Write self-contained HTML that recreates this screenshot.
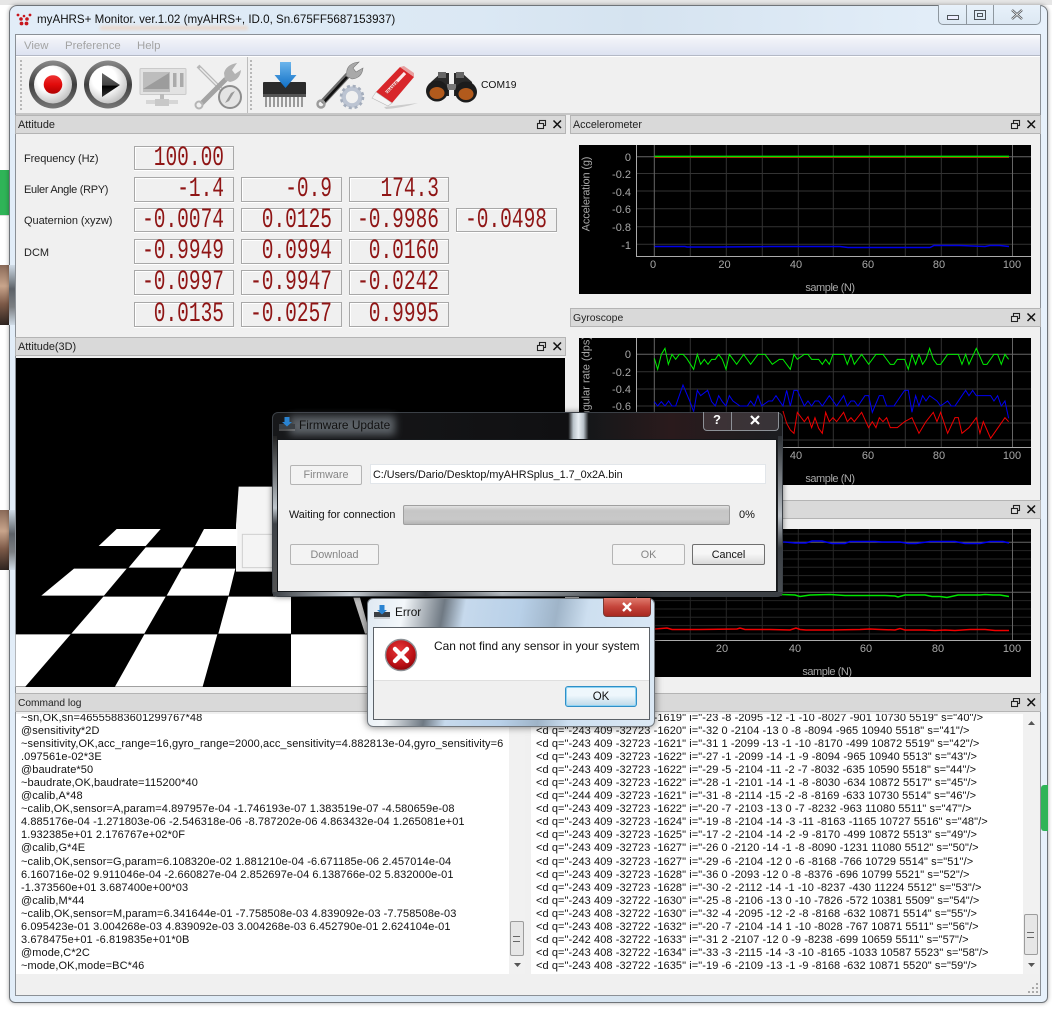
<!DOCTYPE html>
<html><head><meta charset="utf-8"><title>myAHRS+ Monitor</title>
<style>
html,body{margin:0;padding:0;width:1052px;height:1009px;overflow:hidden;background:#fff;font-family:"Liberation Sans",sans-serif;font-size:12px;color:#111}
div,pre,span,svg{position:absolute;box-sizing:border-box}
.t{white-space:nowrap;line-height:14px}
.tb{background:#d9d9d9;border:1px solid #b4b4b4;height:19px;line-height:19px;padding-left:2px;color:#222;font-size:10.9px}
.lcd{background:#f0f0f0;border:1px solid #a8a8a8;box-shadow:inset 1px 1px 0 #fff,0 1px 0 #fff}
.lcd span{right:9px;top:-1px;font:19.5px/24px "Liberation Mono",monospace;color:#8f1515;transform:scale(1,1.42);transform-origin:right center;white-space:pre}
pre{margin:0;font:11px/13.05px "Liberation Sans",sans-serif;letter-spacing:.08px;color:#111;white-space:pre}
.btn{border:1px solid #b4b4b4;border-radius:2px;background:#f3f3f3;color:#858585;text-align:center;font-size:10.8px;line-height:19px}
.lb{font-size:11px;color:#222}
</style></head><body>

<!-- desktop behind -->
<div style="left:0;top:0;width:1052px;height:5px;background:#e6e6e6"></div>
<div style="left:0;top:170px;width:9px;height:46px;background:#2fb457"></div>
<div style="left:0;top:265px;width:9px;height:60px;background:linear-gradient(#8a6a58,#c9a58c 35%,#7d5a48 65%,#2e2420)"></div>
<div style="left:0;top:510px;width:9px;height:60px;background:linear-gradient(#8a6a58,#c9a58c 35%,#7d5a48 65%,#2e2420)"></div>
<div style="left:0;top:215px;width:9px;height:1px;background:#ddd"></div>

<!-- main window -->
<div style="left:9px;top:5px;width:1039px;height:998px;border:1px solid #6f7479;border-radius:8px 8px 6px 6px;background:linear-gradient(90deg,#e2edf8,#dbe8f4 45%,#d5e3f0 60%,#e7f1fb);box-shadow:0 0 4px rgba(0,0,0,.35)"></div>
<div style="left:1041px;top:785px;width:7px;height:46px;background:#2fb457;border-radius:3px 0 0 3px"></div>
<div style="left:9px;top:265px;width:6px;height:60px;background:linear-gradient(#cfdbe6,#5d6268 40%,#7c7f83 70%,#cfdbe6)"></div>
<div style="left:9px;top:510px;width:6px;height:60px;background:linear-gradient(#cfdbe6,#5d6268 40%,#7c7f83 70%,#cfdbe6)"></div>

<!-- logo/title -->
<svg style="left:16px;top:13px" width="16" height="13" viewBox="0 0 16 13"><g fill="#c8161d"><circle cx="2" cy="2" r="1.4"/><circle cx="14" cy="2" r="1.4"/><circle cx="8" cy="3" r="1.3"/><circle cx="5" cy="6" r="1.8"/><circle cx="11" cy="6" r="1.8"/><circle cx="5.5" cy="10.5" r="1.9"/><circle cx="10.5" cy="10.5" r="1.9"/></g></svg>
<div style="left:100px;top:26px;width:148px;height:4px;background:#f0c9ad;opacity:.6;filter:blur(1.5px)"></div>
<div class="t" style="left:37px;top:13px;font-size:11.6px;color:#111">myAHRS+ Monitor. ver.1.02 (myAHRS+, ID.0, Sn.675FF5687153937)</div>

<!-- window buttons -->
<div style="left:938px;top:5px;width:103px;height:20px;border:1px solid #8e979f;border-top:none;border-radius:0 0 5px 5px;background:linear-gradient(#e8f1fa,#dce8f3)"></div>
<div style="left:966px;top:5px;width:1px;height:19px;background:#8e979f"></div>
<div style="left:993px;top:5px;width:1px;height:19px;background:#8e979f"></div>
<div style="left:947px;top:15px;width:12px;height:5px;border:1px solid #4d5358;background:#eef"></div>
<div style="left:974px;top:10px;width:12px;height:10px;border:1px solid #4d5358"></div>
<div style="left:977px;top:13px;width:6px;height:4px;border:1px solid #4d5358"></div>
<svg style="left:1010px;top:8px" width="14" height="13"><path d="M2 2L12 11M12 2L2 11" stroke="#54595e" stroke-width="2.4"/><path d="M2 2L12 11M12 2L2 11" stroke="#fff" stroke-width=".7"/></svg>

<!-- client -->
<div style="left:15px;top:34px;width:1026px;height:962px;background:#f0f0f0;border:1px solid #8b9096"></div>
<div style="left:16px;top:35px;width:1024px;height:21px;background:linear-gradient(#fbfcfe,#f0f2f8 25%,#dde3f1);border-bottom:1px solid #b4b9c6"></div>
<div class="t" style="left:24px;top:39px;color:#a3a3a3;font-size:11.4px">View</div>
<div class="t" style="left:65px;top:39px;color:#a3a3a3;font-size:11.4px">Preference</div>
<div class="t" style="left:137px;top:39px;color:#a3a3a3;font-size:11.4px">Help</div>
<div style="left:16px;top:56px;width:1024px;height:1px;background:#fff"></div>
<div style="left:16px;top:113px;width:1024px;height:2px;background:#c6c6c6"></div>
<div style="left:20px;top:60px;width:2px;height:50px;border-left:2px dotted #b8b8b8"></div>
<div style="left:250px;top:60px;width:2px;height:50px;border-left:2px dotted #b8b8b8"></div>
<div style="left:247px;top:57px;width:1px;height:56px;background:#bdbdbd"></div>

<!-- toolbar icons -->
<svg style="left:0;top:55px" width="520" height="60" viewBox="0 55 520 60">
<defs>
<radialGradient id="ig" cx=".4" cy=".35" r=".7"><stop offset=".45" stop-color="#fff"/><stop offset="1" stop-color="#bcbcbc"/></radialGradient>
<linearGradient id="ring" x1="0" y1="0" x2="0" y2="1"><stop offset="0" stop-color="#8a8a8a"/><stop offset=".5" stop-color="#3f3f3f"/><stop offset="1" stop-color="#777"/></linearGradient>
<linearGradient id="tri" x1="0" y1="0" x2="0" y2="1"><stop offset="0" stop-color="#666"/><stop offset=".5" stop-color="#444"/><stop offset=".55" stop-color="#000"/><stop offset="1" stop-color="#333"/></linearGradient>
<linearGradient id="rd" x1="0" y1="0" x2="0" y2="1"><stop offset="0" stop-color="#ee3333"/><stop offset=".5" stop-color="#e20b0b"/><stop offset="1" stop-color="#b00000"/></linearGradient>
<linearGradient id="blu" x1="0" y1="0" x2="0" y2="1"><stop offset="0" stop-color="#6cb5ec"/><stop offset="1" stop-color="#0f6fc6"/></linearGradient>
</defs>
<circle cx="53" cy="84.5" r="24" fill="url(#ring)"/><circle cx="53" cy="84.5" r="19" fill="url(#ig)"/><circle cx="53" cy="84.5" r="9.3" fill="url(#rd)"/>
<circle cx="108" cy="84.5" r="24" fill="url(#ring)"/><circle cx="108" cy="84.5" r="19" fill="url(#ig)"/><path d="M102 73L120 85L102 97Z" fill="url(#tri)"/>
<!-- monitor -->
<rect x="140" y="68.5" width="46" height="26" rx="1" fill="#e2e2e2" stroke="#cacaca"/>
<rect x="143" y="72" width="27" height="20" fill="#bdbdbd"/><path d="M143 89L169 73V89Z" fill="#9c9c9c"/>
<rect x="173" y="73" width="3.5" height="14" fill="#aaa"/><rect x="180" y="73" width="3.5" height="14" fill="#aaa"/>
<rect x="160" y="94" width="4" height="7" fill="#bbb"/><rect x="146" y="100" width="32" height="4" fill="#d6d6d6"/><rect x="155" y="99" width="14" height="7" fill="#c8c8c8"/>
<!-- tools disabled -->
<path d="M198 66L232 100" stroke="#b8b8b8" stroke-width="4"/><path d="M200 68L226 94" stroke="#ececec" stroke-width="1.4"/>
<path d="M201 104L226 79" stroke="#a3a3a3" stroke-width="5"/>
<path d="M225 80L224 73Q226 65 237 63L232 70L235 74L241 70Q240 80 230 82Z" fill="#b3b3b3"/>
<circle cx="230" cy="97" r="11" fill="#e4e4e4" stroke="#8d8d8d" stroke-width="2"/><path d="M225 103L231 93L235 91L229 101Z" fill="#9a9a9a"/>
<circle cx="199" cy="105" r="3.5" fill="none" stroke="#b5b5b5" stroke-width="2"/>
<!-- chip -->
<g stroke="#9a9a9a" stroke-width="2"><path d="M266 97V107M270 97V107M274 97V107M278 97V107M282 97V107M286 97V107M290 97V107M294 97V107M298 97V107M302 97V107"/></g>
<rect x="263" y="82" width="43" height="15" rx="1" fill="#2b2b2b"/><rect x="263" y="94" width="43" height="3" fill="#555"/>
<path d="M280 62H291V75H296.5L285.5 88L274.5 75H280Z" fill="url(#blu)"/>
<!-- wrench -->
<path d="M322 103L348 75" stroke="#6f6f6f" stroke-width="6"/><path d="M324 102L347 77" stroke="#111" stroke-width="2.6"/>
<circle cx="321" cy="104" r="3.5" fill="none" stroke="#9b9b9b" stroke-width="2.4"/>
<path d="M346 76L347 70Q349 63 359 62L353 68L356 72L363 68Q362 78 352 79Z" fill="#a9a9a9" stroke="#777" stroke-width=".6"/>
<circle cx="352" cy="97" r="8.4" fill="none" stroke="#bcc4d2" stroke-width="4.5"/><circle cx="352" cy="97" r="11" fill="none" stroke="#a4adbc" stroke-width="2.6" stroke-dasharray="3 2.8"/>
<!-- eraser -->
<path d="M384 107L418 103Q402 108 386 109Z" fill="#ccc"/>
<path d="M376 92L400 67L414 77L392 103Z" fill="#d8262a"/>
<path d="M372 98L376 92L392 103L388 106Z" fill="#f5f5f5" stroke="#bbb" stroke-width=".6"/>
<path d="M400 67L404 66L414 73L414 77Z" fill="#e7a0a0"/>
<path d="M386 93L405 73" stroke="#fff" stroke-width="3.2" opacity=".9"/>
<text x="0" y="0" transform="translate(387 94.5) rotate(-46)" font-size="4" font-weight="bold" fill="#b11">ERASER</text>
<!-- binoculars -->
<path d="M431 82L441 73H449V96H430Z" fill="#2a2a2a"/><path d="M472 82L462 73H454V96H473Z" fill="#2a2a2a"/>
<rect x="438" y="72" width="8" height="6" fill="#666"/><rect x="456" y="72" width="8" height="6" fill="#666"/>
<rect x="447" y="84" width="9" height="6" fill="#777"/>
<ellipse cx="437" cy="91" rx="11" ry="10.5" fill="#1c1c1c"/><ellipse cx="466" cy="92" rx="11" ry="10.5" fill="#1c1c1c"/>
<ellipse cx="437" cy="93" rx="7.5" ry="6" fill="#b25a1c"/><ellipse cx="466" cy="94" rx="7.5" ry="6" fill="#b25a1c"/>
</svg>
<div class="t" style="left:481px;top:79px;font-size:10.3px">COM19</div>

<!-- Attitude panel -->
<div class="tb" style="left:15px;top:115px;width:551px">Attitude</div>
<div class="t lb" style="left:24px;top:152px;letter-spacing:-.1px">Frequency (Hz)</div>
<div class="t lb" style="left:24px;top:183px;letter-spacing:-.3px">Euler Angle (RPY)</div>
<div class="t lb" style="left:24px;top:214px;letter-spacing:-.05px">Quaternion (xyzw)</div>
<div class="t lb" style="left:24px;top:246px">DCM</div>

<div class="lcd" style="left:134px;top:146px;width:100px;height:24px"><span>100.00</span></div>
<div class="lcd" style="left:134px;top:177px;width:100px;height:25px"><span>-1.4</span></div>
<div class="lcd" style="left:241px;top:177px;width:101px;height:25px"><span>-0.9</span></div>
<div class="lcd" style="left:349px;top:177px;width:100px;height:25px"><span>174.3</span></div>
<div class="lcd" style="left:134px;top:208px;width:100px;height:24px"><span>-0.0074</span></div>
<div class="lcd" style="left:241px;top:208px;width:101px;height:24px"><span>0.0125</span></div>
<div class="lcd" style="left:349px;top:208px;width:100px;height:24px"><span>-0.9986</span></div>
<div class="lcd" style="left:456px;top:208px;width:101px;height:24px"><span>-0.0498</span></div>
<div class="lcd" style="left:134px;top:239px;width:100px;height:25px"><span>-0.9949</span></div>
<div class="lcd" style="left:241px;top:239px;width:101px;height:25px"><span>0.0994</span></div>
<div class="lcd" style="left:349px;top:239px;width:100px;height:25px"><span>0.0160</span></div>
<div class="lcd" style="left:134px;top:270px;width:100px;height:25px"><span>-0.0997</span></div>
<div class="lcd" style="left:241px;top:270px;width:101px;height:25px"><span>-0.9947</span></div>
<div class="lcd" style="left:349px;top:270px;width:100px;height:25px"><span>-0.0242</span></div>
<div class="lcd" style="left:134px;top:302px;width:100px;height:25px"><span>0.0135</span></div>
<div class="lcd" style="left:241px;top:302px;width:101px;height:25px"><span>-0.0257</span></div>
<div class="lcd" style="left:349px;top:302px;width:100px;height:25px"><span>0.9995</span></div>

<!-- 3D panel -->
<div class="tb" style="left:15px;top:337px;width:551px">Attitude(3D)</div>
<div style="left:16px;top:358px;width:549px;height:329px;background:#000"></div>
<svg style="left:0;top:355px" width="370" height="345" viewBox="0 0 1110 1035">
<g fill="#fff">
<path d="M716 395H830V650H708V510Z" fill="#f4f4f4"/>
<path d="M350 522H482L437 573H296Z"/><path d="M612 522H712V573H585Z"/>
<path d="M437 577H582L546 638H386Z"/>
<path d="M222 641H380L312 722H124Z"/><path d="M545 641H706L686 722H500Z"/>
<path d="M310 725H497L433 836H214Z"/><path d="M685 725H873V836H655Z"/>
<path d="M47 838H212L76 995H47Z"/><path d="M433 838H652L608 995H345Z"/><path d="M873 838H1110V995H873Z"/>
<path d="M1060 728H1080L1110 836H1095Z" fill="#bcbcbc"/>
</g>
<rect x="727" y="538" width="100" height="100" fill="none" stroke="#cfcfcf" stroke-width="3"/>
</svg>

<!-- Right panels -->
<div class="tb" style="left:570px;top:115px;width:471px;font-size:10.7px">Accelerometer</div>
<div class="tb" style="left:570px;top:308px;width:471px;font-size:10.4px">Gyroscope</div>
<div class="tb" style="left:570px;top:500px;width:471px">Magnetometer</div>

<!-- dock icons -->
<svg style="left:0;top:0" width="1052" height="1009" viewBox="0 0 1052 1009">
<defs><g id="dk"><rect x="2.5" y="0.5" width="6" height="5" fill="none" stroke="#222" stroke-width="1.1"/><rect x="0.5" y="3.5" width="6" height="5" fill="#e0e0e0" stroke="#222" stroke-width="1.1"/><path d="M16.5 0.5L24 8M24 0.5L16.5 8" stroke="#111" stroke-width="1.5"/></g></defs>
<use href="#dk" x="537" y="120"/><use href="#dk" x="537" y="342"/><use href="#dk" x="1011" y="120"/><use href="#dk" x="1011" y="313"/><use href="#dk" x="1011" y="505"/><use href="#dk" x="1011" y="698"/>

<!-- accel chart -->
<rect x="579" y="145" width="452" height="149" fill="#000"/>
<path d="M690.3 145V256M726.3 145V256M762.3 145V256M798.3 145V256M833.3 145V256M869.3 145V256M905.3 145V256M941.3 145V256M977.3 145V256M637 173.5H1031M637 191H1031M637 208.7H1031M637 226.7H1031M637 244.3H1031" stroke="#333" fill="none"/>
<path d="M654.3 145V256M1012.5 145V256M637 156.7H1031" stroke="#666" fill="none"/>
<path d="M636.5 145V256.5H1031" stroke="#aaa" fill="none"/>
<path d="M654.5 157.2H1009" stroke="#e00000" stroke-width="1.5"/>
<path d="M654.5 156.4H1009" stroke="#00e000" stroke-width="1.6"/>
<path d="M654.5 246.5H685L687 247H717L770 246.5H840L848 247.5H930L934 245.5H960L985 246.5L990 245.5H1000L1009 246.5" stroke="#0000e6" stroke-width="1.5" fill="none"/>
<g font-family="Liberation Sans" font-size="11" fill="#a8a8a8">
<g text-anchor="end"><text x="631" y="161">0</text><text x="631" y="178">-0.2</text><text x="631" y="196">-0.4</text><text x="631" y="213">-0.6</text><text x="631" y="231">-0.8</text><text x="631" y="249">-1</text></g>
<g text-anchor="middle"><text x="653" y="268">0</text><text x="724.5" y="268">20</text><text x="796" y="268">40</text><text x="868" y="268">60</text><text x="939" y="268">80</text><text x="1012" y="268">100</text><text x="830" y="291" letter-spacing="-.45">sample (N)</text>
<text transform="translate(589.5 194) rotate(-90)" letter-spacing="-.15">Acceleration (g)</text></g></g>

<!-- gyro chart -->
<clipPath id="gc"><rect x="579" y="338" width="452" height="147"/></clipPath>
<rect x="579" y="338" width="452" height="147" fill="#000"/>
<path d="M690.3 338V447M726.3 338V447M762.3 338V447M798.3 338V447M833.3 338V447M869.3 338V447M905.3 338V447M941.3 338V447M977.3 338V447M637 371.7H1031M637 389H1031M637 406H1031M637 423H1031M637 440H1031" stroke="#333" fill="none"/>
<path d="M654.3 338V447M1012.5 338V447M637 354.3H1031" stroke="#666" fill="none"/>
<path d="M636.5 338V447.5H1031" stroke="#aaa" fill="none"/>
<g font-family="Liberation Sans" font-size="11" fill="#a8a8a8" clip-path="url(#gc)">
<g text-anchor="end"><text x="631" y="358">0</text><text x="631" y="376">-0.2</text><text x="631" y="393">-0.4</text><text x="631" y="410">-0.6</text></g>
<g text-anchor="middle"><text x="796" y="459">40</text><text x="868" y="459">60</text><text x="939" y="459">80</text><text x="1012" y="459">100</text><text x="830" y="482" letter-spacing="-.45">sample (N)</text>
<text transform="translate(589.5 380) rotate(-90)">Angular rate (dps)</text></g></g>
<g fill="none" stroke-width="3" transform="translate(560 305) scale(.3333)">
<polyline stroke="#00ee00" points="283,160 293,193 304,148 315,130 325,178 336,148 347,163 358,148 369,148 380,160 401,193 412,148 422,178 433,163 444,178 455,163 466,163 476,148 487,163 498,193 508,148 519,163 530,178 551,148 572,178 594,148 615,148 637,178 658,163 669,163 691,193 702,148 712,163 733,148 744,148 755,163 776,163 787,178 797,163 808,178 819,148 851,148 862,178 873,148 883,178 905,148 926,178 948,148 969,148 991,178 1002,178 1012,163 1034,163 1045,193 1056,148 1067,178 1077,148 1088,178 1098,163 1109,130 1120,163 1131,178 1142,178 1163,148 1195,148 1206,178 1217,148 1227,178 1249,130 1270,178 1281,178 1302,148 1313,148 1324,178 1335,148 1346,163"/>
<polyline stroke="#0000f0" points="283,290 293,303 304,290 315,303 326,288 336,303 347,303 369,240 390,290 401,320 412,256 422,272 443,256 455,290 466,303 476,272 487,290 498,303 508,272 519,288 540,303 562,303 572,288 583,303 594,272 605,303 626,288 637,288 648,272 669,303 680,256 691,303 702,256 712,256 733,303 744,288 755,303 765,288 776,288 787,303 808,272 830,303 851,272 862,303 873,288 883,288 894,303 915,272 926,272 937,322 958,272 969,272 980,303 1002,303 1012,288 1034,256 1045,256 1056,322 1067,272 1077,303 1088,272 1098,288 1109,272 1131,288 1142,303 1163,288 1174,303 1185,303 1206,272 1217,256 1227,272 1238,256 1249,272 1281,272 1292,272 1302,288 1313,272 1324,303 1335,288 1346,340"/>
<polyline stroke="#f00000" points="669,318 680,355 691,375 702,385 712,322 733,350 744,335 755,368 765,338 776,370 787,385 797,322 808,350 819,338 830,350 851,322 862,350 873,338 883,350 905,322 926,368 937,350 948,368 958,338 969,350 980,338 991,368 1012,368 1034,350 1056,338 1077,385 1098,350 1120,322 1131,350 1142,322 1163,385 1185,338 1195,338 1206,385 1227,368 1249,338 1260,385 1270,350 1292,400 1335,338 1346,350"/>
</g>

<!-- mag chart -->
<rect x="579" y="529" width="452" height="148" fill="#000"/>
<path d="M690.3 529V640M726.3 529V640M762.3 529V640M798.3 529V640M833.3 529V640M869.3 529V640M905.3 529V640M941.3 529V640M977.3 529V640M637 534H1031M637 550.6H1031M637 559H1031M637 567.3H1031M637 575.6H1031M637 584H1031M637 600.6H1031M637 609H1031M637 617.3H1031M637 625.6H1031M637 634H1031" stroke="#262626" fill="none"/>
<path d="M1012.5 529V640M637 542.3H1031M637 592.3H1031" stroke="#666" fill="none"/>
<path d="M636.5 529V640.5H1031" stroke="#aaa" fill="none"/>
<path d="M654 541.5H760L765 543.5H772L778 542H785L795 543H806L812 541H822L832 543.5H845L850 541.5H875L882 542H900L908 543.5H916L930 541.5H955L965 543.5H980L990 541.5H1003L1009 543" stroke="#0000f0" stroke-width="1.5" fill="none"/>
<path d="M654 594L770 595.5L782 594.5L795 595L800 596.5L810 595L830 594.5L845 595.5H870L885 595.5L895 596L898 597L905 595H925L932 596.5H940L947 597.5L958 595H980L985 594.5L993 595H1000L1009 596.5" stroke="#00e600" stroke-width="1.5" fill="none"/>
<path d="M655 629L667 628L672 629.5H700L737 629L740 628L745 629.5H770L790 630L796 628L800 629.5L806 630H830L860 629.5L870 629L880 629.5L895 630L900 628.5L905 630H925L935 630.5L945 630L955 630.5L970 629.5H985L995 630.5H1009" stroke="#f00000" stroke-width="1.5" fill="none"/>
<g font-family="Liberation Sans" font-size="11" fill="#a8a8a8" text-anchor="middle"><text x="722" y="652">20</text><text x="795" y="652">40</text><text x="866" y="652">60</text><text x="938" y="652">80</text><text x="1012" y="652">100</text><text x="827" y="675" letter-spacing="-.45">sample (N)</text></g>
</svg>

<!-- Command log -->
<div class="tb" style="left:15px;top:693px;width:511px;font-size:10.2px">Command log</div>
<div class="tb" style="left:530px;top:693px;width:511px"></div>
<svg style="left:1011px;top:698px" width="30" height="10"><rect x="2.5" y=".5" width="6" height="5" fill="none" stroke="#222" stroke-width="1.1"/><rect x=".5" y="3.5" width="6" height="5" fill="#e0e0e0" stroke="#222" stroke-width="1.1"/><path d="M16.5 .5L24 8M24 .5L16.5 8" stroke="#111" stroke-width="1.5"/></svg>
<div style="left:16px;top:714px;width:509px;height:260px;background:#fff;overflow:hidden">
<pre style="left:5px;top:-2px;letter-spacing:.09px">~sn,OK,sn=46555883601299767*48
@sensitivity*2D
~sensitivity,OK,acc_range=16,gyro_range=2000,acc_sensitivity=4.882813e-04,gyro_sensitivity=6
.097561e-02*3E
@baudrate*50
~baudrate,OK,baudrate=115200*40
@calib,A*48
~calib,OK,sensor=A,param=4.897957e-04 -1.746193e-07 1.383519e-07 -4.580659e-08
4.885176e-04 -1.271803e-06 -2.546318e-06 -8.787202e-06 4.863432e-04 1.265081e+01
1.932385e+01 2.176767e+02*0F
@calib,G*4E
~calib,OK,sensor=G,param=6.108320e-02 1.881210e-04 -6.671185e-06 2.457014e-04
6.160716e-02 9.911046e-04 -2.660827e-04 2.852697e-04 6.138766e-02 5.832000e-01
-1.373560e+01 3.687400e+00*03
@calib,M*44
~calib,OK,sensor=M,param=6.341644e-01 -7.758508e-03 4.839092e-03 -7.758508e-03
6.095423e-01 3.004268e-03 4.839092e-03 3.004268e-03 6.452790e-01 2.624104e-01
3.678475e+01 -6.819835e+01*0B
@mode,C*2C
~mode,OK,mode=BC*46</pre>
<div style="left:493px;top:0;width:16px;height:260px;background:#f1f1f1"></div>
<div style="left:494px;top:207px;width:14px;height:35px;background:#e6e6e6;border:1px solid #9c9c9c;border-radius:2px"></div>
<div style="left:497px;top:222px;width:7px;height:6px;border-top:1px solid #666;border-bottom:1px solid #666"></div>
<svg style="left:497px;top:248px" width="9" height="6"><path d="M1 1H8L4.5 5Z" fill="#555"/></svg>
</div>
<div style="left:531px;top:714px;width:508px;height:260px;background:#fff;overflow:hidden">
<pre style="left:5px;top:-2px">&lt;d q="-243 409 -32723 -1619" i="-23 -8 -2095 -12 -1 -10 -8027 -901 10730 5519" s="40"/&gt;
&lt;d q="-243 409 -32723 -1620" i="-32 0 -2104 -13 0 -8 -8094 -965 10940 5518" s="41"/&gt;
&lt;d q="-243 409 -32723 -1621" i="-31 1 -2099 -13 -1 -10 -8170 -499 10872 5519" s="42"/&gt;
&lt;d q="-243 409 -32723 -1622" i="-27 -1 -2099 -14 -1 -9 -8094 -965 10940 5513" s="43"/&gt;
&lt;d q="-243 409 -32723 -1622" i="-29 -5 -2104 -11 -2 -7 -8032 -635 10590 5518" s="44"/&gt;
&lt;d q="-243 409 -32723 -1622" i="-28 -1 -2101 -14 -1 -8 -8030 -634 10872 5517" s="45"/&gt;
&lt;d q="-244 409 -32723 -1621" i="-31 -8 -2114 -15 -2 -8 -8169 -633 10730 5514" s="46"/&gt;
&lt;d q="-243 409 -32723 -1622" i="-20 -7 -2103 -13 0 -7 -8232 -963 11080 5511" s="47"/&gt;
&lt;d q="-243 409 -32723 -1624" i="-19 -8 -2104 -14 -3 -11 -8163 -1165 10727 5516" s="48"/&gt;
&lt;d q="-243 409 -32723 -1625" i="-17 -2 -2104 -14 -2 -9 -8170 -499 10872 5513" s="49"/&gt;
&lt;d q="-243 409 -32723 -1627" i="-26 0 -2120 -14 -1 -8 -8090 -1231 11080 5512" s="50"/&gt;
&lt;d q="-243 409 -32723 -1627" i="-29 -6 -2104 -12 0 -6 -8168 -766 10729 5514" s="51"/&gt;
&lt;d q="-243 409 -32723 -1628" i="-36 0 -2093 -12 0 -8 -8376 -696 10799 5521" s="52"/&gt;
&lt;d q="-243 409 -32723 -1628" i="-30 -2 -2112 -14 -1 -10 -8237 -430 11224 5512" s="53"/&gt;
&lt;d q="-243 409 -32722 -1630" i="-25 -8 -2106 -13 0 -10 -7826 -572 10381 5509" s="54"/&gt;
&lt;d q="-243 408 -32722 -1630" i="-32 -4 -2095 -12 -2 -8 -8168 -632 10871 5514" s="55"/&gt;
&lt;d q="-243 408 -32722 -1632" i="-20 -7 -2104 -14 1 -10 -8028 -767 10871 5511" s="56"/&gt;
&lt;d q="-242 408 -32722 -1633" i="-31 2 -2107 -12 0 -9 -8238 -699 10659 5511" s="57"/&gt;
&lt;d q="-243 408 -32722 -1634" i="-33 -3 -2115 -14 -3 -10 -8165 -1033 10587 5523" s="58"/&gt;
&lt;d q="-243 408 -32722 -1635" i="-19 -6 -2109 -13 -1 -9 -8168 -632 10871 5520" s="59"/&gt;</pre>
<div style="left:492px;top:0;width:16px;height:260px;background:#f1f1f1"></div>
<svg style="left:496px;top:6px" width="9" height="6"><path d="M1 5H8L4.5 1Z" fill="#555"/></svg>
<div style="left:493px;top:200px;width:14px;height:41px;background:#e6e6e6;border:1px solid #9c9c9c;border-radius:2px"></div>
<div style="left:496px;top:218px;width:7px;height:6px;border-top:1px solid #666;border-bottom:1px solid #666"></div>
<svg style="left:496px;top:248px" width="9" height="6"><path d="M1 1H8L4.5 5Z" fill="#555"/></svg>
</div>
<svg style="left:1028px;top:983px" width="11" height="11"><g fill="#aaa"><rect x="8" y="8" width="2" height="2"/><rect x="4" y="8" width="2" height="2"/><rect x="8" y="4" width="2" height="2"/><rect x="0" y="8" width="2" height="2"/><rect x="4" y="4" width="2" height="2"/><rect x="8" y="0" width="2" height="2"/></g></svg>

<!-- Firmware dialog -->
<div style="left:272px;top:412px;width:511px;height:185px;border:1px solid #3b4046;border-radius:6px;background:linear-gradient(90deg,#17181a 0,#101012 58%,#b9c2c9 59%,#e7edf2 60%,#b9c2c9 61%,#151719 62%,#2a1a1c 78%,#1b1d20 100%);box-shadow:0 0 6px rgba(0,0,0,.5)"></div>
<div style="left:290px;top:416px;width:105px;height:19px;background:#646a70;filter:blur(4px);opacity:.9"></div>
<div style="left:273px;top:436px;width:4px;height:160px;background:linear-gradient(#222,#bfc6cc 45%,#3d4146 55%,#555 100%)"></div>
<div style="left:778px;top:436px;width:4px;height:160px;background:linear-gradient(#2c3034,#b8bec4 50%,#3a3f44 70%,#4a4f54)"></div>
<div style="left:273px;top:592px;width:509px;height:4px;background:linear-gradient(90deg,#3b3f44,#c8ced4 15%,#3b3f44 30%,#c2c8ce 45%,#40454a 70%,#3b3f44)"></div>
<svg style="left:279px;top:416px" width="16" height="16" viewBox="0 0 16 16"><path d="M1 11V15M3 11V15M5 11V15M7 11V15M9 11V15M11 11V15M13 11V15M15 11V15" stroke="#999" stroke-width=".8"/><rect x="0" y="8" width="16" height="5" fill="#3a3f44"/><path d="M5.5 1H10.5V6H13L8 10.5L3 6H5.5Z" fill="#2a84d2"/></svg>
<div class="t" style="left:299px;top:418px;color:#111;font-size:11.9px">Firmware Update</div>
<div style="left:703px;top:412px;width:76px;height:19px;border:1px solid #8d9197;border-top:none;border-radius:0 0 4px 4px;background:rgba(90,80,85,.45)"></div>
<div style="left:731px;top:412px;width:1px;height:18px;background:#8d9197"></div>
<div class="t" style="left:713px;top:413px;font-weight:bold;font-size:13px;color:#fff">?</div>
<svg style="left:749px;top:414px" width="12" height="12"><path d="M2 2L10 10M10 2L2 10" stroke="#fff" stroke-width="2.2"/></svg>
<div style="left:277px;top:439px;width:500px;height:153px;background:#f0f0f0;border:1px solid #15181b"></div>
<div class="btn" style="left:290px;top:465px;width:72px;height:20px">Firmware</div>
<div style="left:370px;top:464px;width:396px;height:20px;background:#fff;border:1px solid #e2e6ea"></div>
<div class="t" style="left:373px;top:468px;font-size:10.8px">C:/Users/Dario/Desktop/myAHRSplus_1.7_0x2A.bin</div>
<div class="t" style="left:289px;top:508px;font-size:10.8px">Waiting for connection</div>
<div style="left:403px;top:505px;width:327px;height:20px;border:1px solid #a0a0a0;border-radius:2px;background:linear-gradient(#e2e2e2,#c6c6c6 25%,#c8c8c8 75%,#b5b5b5)"></div>
<div class="t" style="left:739px;top:508px;font-size:11px">0%</div>
<div class="btn" style="left:290px;top:544px;width:89px;height:21px;line-height:20px">Download</div>
<div class="btn" style="left:612px;top:544px;width:73px;height:21px;line-height:20px">OK</div>
<div class="btn" style="left:692px;top:544px;width:73px;height:21px;line-height:20px;color:#111;border-color:#6f6f6f;background:linear-gradient(#f6f6f6 45%,#dadada)">Cancel</div>

<!-- Error dialog -->
<div style="left:367px;top:598px;width:288px;height:129px;border:1px solid #70767c;border-radius:6px;background:linear-gradient(100deg,#dfe9f2 0,#f3f7fa 12%,#6f7983 25%,#c6d9ec 32%,#b8d0e8 50%,#9fb4c8 62%,#cddff0 72%,#dce9f5 100%);box-shadow:0 0 8px rgba(0,0,0,.55)"></div>
<div style="left:373px;top:627px;width:277px;height:93px;background:linear-gradient(#fff 52px,#dfdfdf 52px,#dfdfdf 53px,#f0f0f0 53px);border:1px solid #5b6167"></div>
<div style="left:603px;top:598px;width:48px;height:19px;border:1px solid #7a3a34;border-top:none;border-radius:0 0 4px 4px;background:linear-gradient(#e07b6f,#c4443a 50%,#a8281f)"></div>
<svg style="left:621px;top:601px" width="12" height="12"><path d="M2 2L10 10M10 2L2 10" stroke="#fff" stroke-width="2.4"/></svg>
<svg style="left:374px;top:604px" width="16" height="16" viewBox="0 0 16 16"><path d="M1 11V15M3 11V15M5 11V15M7 11V15M9 11V15M11 11V15M13 11V15M15 11V15" stroke="#999" stroke-width=".8"/><rect x="0" y="8" width="16" height="5" fill="#3a3f44"/><path d="M5.5 1H10.5V6H13L8 10.5L3 6H5.5Z" fill="#2a84d2"/></svg>
<div class="t" style="left:395px;top:605px;font-size:11.8px">Error</div>
<svg style="left:384px;top:638px" width="34" height="34" viewBox="0 0 34 34"><defs><radialGradient id="er" cx=".45" cy=".35" r=".7"><stop offset="0" stop-color="#e8383a"/><stop offset=".7" stop-color="#b80f14"/><stop offset="1" stop-color="#7e0508"/></radialGradient></defs><circle cx="17" cy="17" r="15.5" fill="url(#er)" stroke="#8c9095" stroke-width="1.4"/><path d="M11 11L23 23M23 11L11 23" stroke="#fff" stroke-width="4.4" stroke-linecap="round"/></svg>
<div class="t" style="left:434px;top:639px;font-size:11.9px">Can not find any sensor in your system</div>
<div style="left:565px;top:686px;width:72px;height:21px;border:1px solid #2f8fc7;box-shadow:inset 0 0 0 1px #8fd3f3;border-radius:3px;background:linear-gradient(#eef7fc 45%,#bcd8e8);text-align:center;line-height:21px;font-size:11.5px">OK</div>

</body></html>
